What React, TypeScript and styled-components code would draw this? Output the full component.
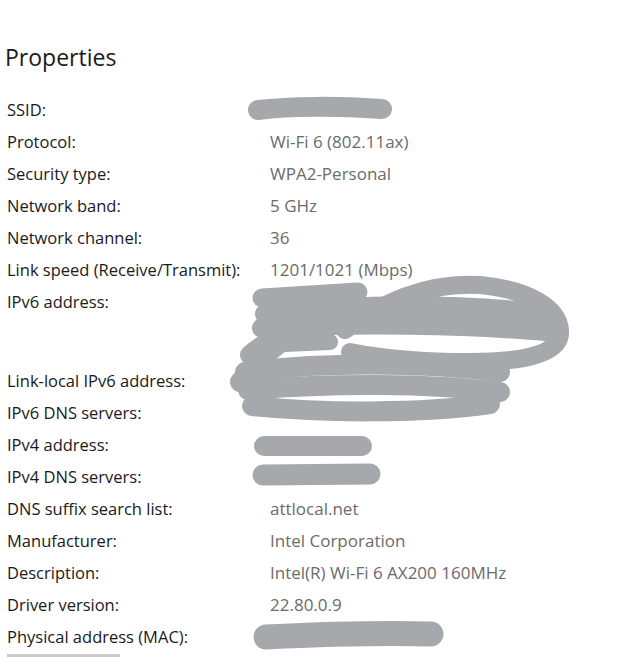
import styled, { createGlobalStyle } from 'styled-components'

const GlobalStyle = createGlobalStyle`
  html, body {
    margin: 0;
    padding: 0;
    background: #ffffff;
  }
  body {
    font-family: 'Open Sans', 'Noto Sans', 'Liberation Sans', sans-serif;
    color: #1a1a1a;
  }
`

const Page = styled.div`
  position: relative;
  width: 627px;
  height: 657px;
  overflow: hidden;
`

const Title = styled.h1`
  margin: 0;
  padding: 40px 0 0 5px;
  height: 54px;
  line-height: 34px;
  font-size: 23px;
  font-weight: 400;
  color: #1a1a1a;
  box-sizing: content-box;
`

const List = styled.div`
  display: flex;
  flex-flow: column;
`

const Row = styled.div<{ $height: number }>`
  display: grid;
  grid-template-columns: 263px 1fr;
  height: ${(p) => p.$height}px;
  padding-left: 7px;
`

const Label = styled.span`
  font-size: 16.5px;
  line-height: 32px;
  color: #1a1a1a;
  white-space: nowrap;
`

const Value = styled.span`
  font-size: 17px;
  line-height: 32px;
  color: #6b6b6b;
  white-space: nowrap;
`

const CopyButton = styled.button`
  display: block;
  margin: 1px 0 0 7px;
  width: 113px;
  height: 32px;
  border: none;
  background: #cccccc;
`

const Redactions = styled.svg`
  position: absolute;
  top: 0;
  left: 0;
  pointer-events: none;
`

const rows: { label: string; value: string; height?: number }[] = [
  { label: 'SSID:', value: '' },
  { label: 'Protocol:', value: 'Wi-Fi 6 (802.11ax)' },
  { label: 'Security type:', value: 'WPA2-Personal' },
  { label: 'Network band:', value: '5 GHz' },
  { label: 'Network channel:', value: '36' },
  { label: 'Link speed (Receive/Transmit):', value: '1201/1021 (Mbps)' },
  { label: 'IPv6 address:', value: '', height: 79 },
  { label: 'Link-local IPv6 address:', value: '' },
  { label: 'IPv6 DNS servers:', value: '' },
  { label: 'IPv4 address:', value: '' },
  { label: 'IPv4 DNS servers:', value: '' },
  { label: 'DNS suffix search list:', value: 'attlocal.net' },
  { label: 'Manufacturer:', value: 'Intel Corporation' },
  { label: 'Description:', value: 'Intel(R) Wi-Fi 6 AX200 160MHz' },
  { label: 'Driver version:', value: '22.80.0.9' },
  { label: 'Physical address (MAC):', value: '' },
]

const ink = '#a7a8ab'

// hand-drawn redaction marks over the private values
const Scribbles = () => (
  <Redactions width="627" height="657" viewBox="0 0 627 657">
    <g fill="none" stroke={ink} strokeLinecap="round" strokeLinejoin="round">
      <path d="M258 110 C 290 106, 340 106, 382 109" strokeWidth="20" />
      <path d="M262 298 L 358 292" strokeWidth="19" />
      <path d="M265 314 C 340 306, 440 302, 548 314" strokeWidth="20" />
      <path d="M262 328 C 350 322, 470 324, 558 332" strokeWidth="20" />
      <path d="M345 330 C 385 300, 430 282, 480 285 C 530 290, 558 308, 560 330 C 562 352, 530 362, 470 362 C 420 362, 380 358, 350 352" strokeWidth="18" />
      <path d="M240 382 C 265 350, 300 325, 345 312" strokeWidth="20" />
      <path d="M250 355 C 270 338, 300 326, 330 320" strokeWidth="20" />
      <path d="M262 345 L 330 342" strokeWidth="16" />
      <path d="M245 372 C 320 362, 420 362, 500 372" strokeWidth="20" />
      <path d="M248 390 C 330 383, 430 383, 500 392" strokeWidth="20" />
      <path d="M252 406 C 320 413, 420 414, 490 404" strokeWidth="20" />
      <path d="M264 446 L 362 446" strokeWidth="20" />
      <path d="M263 475 L 370 474" strokeWidth="21" />
      <path d="M266 637 C 330 634, 390 633, 431 634" strokeWidth="25" />
    </g>
  </Redactions>
)

const App = () => (
  <Page>
    <GlobalStyle />
    <Title>Properties</Title>
    <List>
      {rows.map((r) => (
        <Row key={r.label} $height={r.height ?? 32}>
          <Label>{r.label}</Label>
          <Value>{r.value}</Value>
        </Row>
      ))}
    </List>
    <CopyButton aria-label="Copy" />
    <Scribbles />
  </Page>
)

export default App
